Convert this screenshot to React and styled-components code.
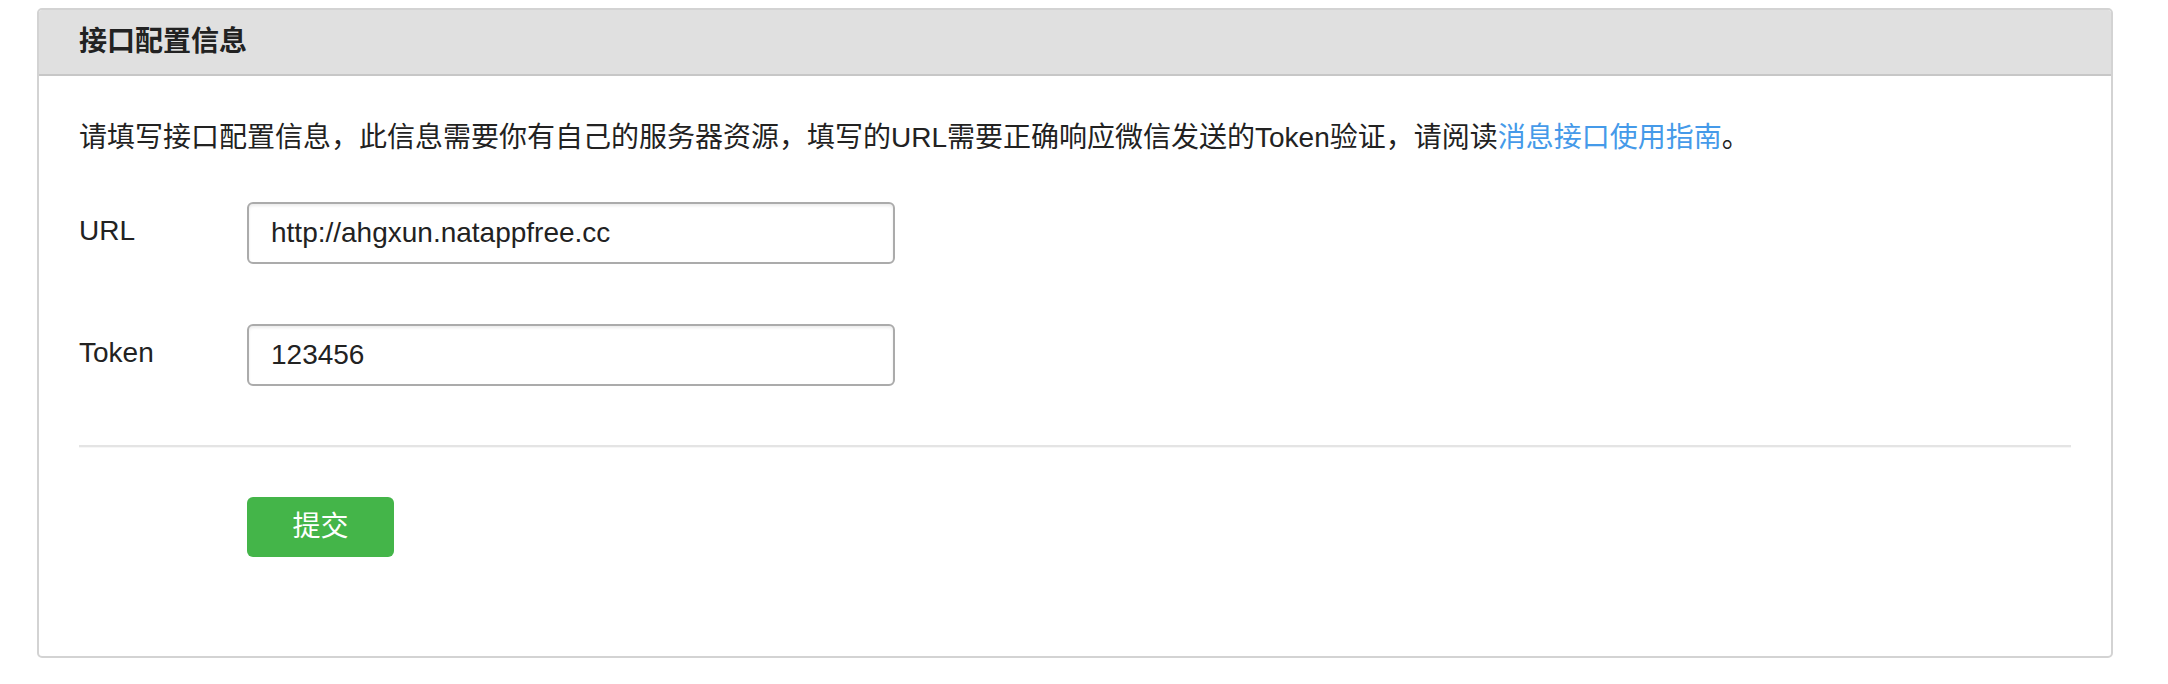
import React from "react";
import styled, { createGlobalStyle } from "styled-components";

const GlobalStyle = createGlobalStyle`
  html, body {
    margin: 0;
    padding: 0;
    background: #ffffff;
  }
  body {
    font-family: "Liberation Sans", "Noto Sans CJK SC", sans-serif;
    color: #222222;
  }
`;

const Page = styled.div`
  padding: 8px 0 0 37px;
`;

const Panel = styled.section`
  width: 2076px;
  box-sizing: border-box;
  border: 2px solid #d3d3d3;
  border-radius: 5px;
  background: #ffffff;
  overflow: hidden;
`;

const PanelHeader = styled.header`
  height: 64px;
  display: flex;
  align-items: center;
  padding: 0 40px;
  background: #e0e0e0;
  border-top: 2px solid #e9e9e9;
  border-bottom: 2px solid #c7c7c7;
  box-sizing: content-box;
  margin-top: -2px;
`;

const Title = styled.h2`
  margin: 0;
  font-family: "Liberation Sans", "Noto Sans CJK SC", sans-serif;
  font-size: 28px;
  font-weight: bold;
  color: #222222;
  line-height: 1;
`;

const PanelBody = styled.div`
  padding: 40px 40px 99px;
`;

const Description = styled.p`
  margin: 0 0 42px;
  font-size: 28px;
  line-height: 44px;
  color: #222222;
`;

const Link = styled.a`
  color: #459ae9;
  text-decoration: none;
`;

const FormRow = styled.div`
  display: flex;
  align-items: center;
  margin-bottom: ${(p) => p.$gap}px;
`;

const Label = styled.label`
  width: 168px;
  flex: none;
  font-size: 28px;
  line-height: 1;
  color: #222222;
  margin-top: -4px;
`;

const TextInput = styled.input`
  width: 648px;
  height: 62px;
  box-sizing: border-box;
  border: 2px solid #ababab;
  border-radius: 6px;
  padding: 0 22px;
  font-family: "Liberation Sans", "Noto Sans CJK SC", sans-serif;
  font-size: 28px;
  color: #222222;
  background: #ffffff;
  box-shadow: inset 0 2px 3px rgba(0, 0, 0, 0.08);
  outline: none;
`;

const Divider = styled.hr`
  margin: 0 0 50px;
  border: none;
  height: 2px;
  background: #e4e4e4;
  box-shadow: 0 1px 0 #f6f6f6;
`;

const ButtonRow = styled.div`
  display: flex;
  padding-left: 168px;
`;

const SubmitButton = styled.button`
  width: 147px;
  height: 60px;
  border: none;
  border-radius: 6px;
  background: #44b549;
  color: #ffffff;
  font-family: "Liberation Sans", "Noto Sans CJK SC", sans-serif;
  font-size: 28px;
  line-height: 1;
  cursor: pointer;
  padding: 0;
`;

export default function App() {
  return (
    <>
      <GlobalStyle />
      <Page>
        <Panel>
          <PanelHeader>
            <Title>接口配置信息</Title>
          </PanelHeader>
          <PanelBody>
            <Description>
              请填写接口配置信息，此信息需要你有自己的服务器资源，填写的URL需要正确响应微信发送的Token验证，请阅读
              <Link href="#">消息接口使用指南</Link>。
            </Description>
            <FormRow $gap={60}>
              <Label>URL</Label>
              <TextInput defaultValue="http://ahgxun.natappfree.cc" />
            </FormRow>
            <FormRow $gap={59}>
              <Label>Token</Label>
              <TextInput defaultValue="123456" />
            </FormRow>
            <Divider />
            <ButtonRow>
              <SubmitButton>提交</SubmitButton>
            </ButtonRow>
          </PanelBody>
        </Panel>
      </Page>
    </>
  );
}
